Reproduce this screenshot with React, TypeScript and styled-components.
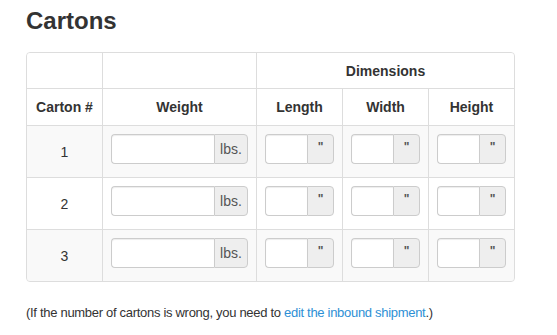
import React from 'react'
import styled, { createGlobalStyle } from 'styled-components'

const GlobalStyle = createGlobalStyle`
    body{
        margin: 0;
        background: #fff;
        color: #333;
        font-family: "Liberation Sans", Arial, Helvetica, sans-serif;
        font-size: 14px;
    }
`

const Page = styled.div`
    padding: 0 26px;
    width: 489px;
`

const Title = styled.h3`
    margin: 8px 0 18px;
    font-size: 24px;
    line-height: 1.1;
    font-weight: bold;
    color: #333;
`

const TablePanel = styled.div`
    border: 1px solid #ddd;
    border-radius: 4px;
    overflow: hidden;
`

const Grid = styled.div`
    display: grid;
    grid-template-columns: 75px 153px 85px 85px 85px;
    grid-template-rows: 35px 36px 51px 51px 51px;
    gap: 1px;
    background-color: #ddd;
`

const HeadCell = styled.div<{ $span?: number }>`
    grid-column: span ${(props) => props.$span || 1};
    display: flex;
    align-items: center;
    justify-content: center;
    background-color: #fff;
    font-weight: bold;
    font-size: 14px;
`

const BodyCell = styled.div<{ $striped: boolean }>`
    display: flex;
    align-items: flex-start;
    justify-content: center;
    padding: 8px;
    background-color: ${(props) => (props.$striped ? '#f9f9f9' : '#fff')};
    &.num{
        align-items: center;
        padding: 0;
    }
`

const InputGroup = styled.div`
    display: flex;
    width: 100%;
    height: 30px;
`

const Field = styled.input`
    flex: 1;
    min-width: 0;
    box-sizing: border-box;
    height: 30px;
    margin: 0;
    padding: 4px 8px;
    border: 1px solid #ccc;
    border-right: none;
    border-radius: 4px 0 0 4px;
    background: #fff;
    box-shadow: inset 0 1px 1px rgba(0, 0, 0, 0.075);
    font: inherit;
    &:focus{
        outline: none;
    }
`

const Addon = styled.span<{ $width: number }>`
    display: flex;
    align-items: center;
    justify-content: center;
    box-sizing: border-box;
    width: ${(props) => props.$width}px;
    height: 30px;
    border: 1px solid #ccc;
    border-radius: 0 4px 4px 0;
    background-color: #eee;
    color: #555;
    font-size: 14px;
    &.inch{
        font-size: 12px;
        font-weight: bold;
        padding-bottom: 4px;
    }
`

const Note = styled.p`
    margin: 21px 0 0;
    font-size: 13px;
    line-height: 20px;
    letter-spacing: -0.3px;
    color: #333;
    & > a{
        color: #2d8fd5;
        text-decoration: none;
    }
`

const cartons = [1, 2, 3]

const App = () => {
  return (
    <Page>
        <GlobalStyle />
        <Title>Cartons</Title>
        <TablePanel>
            <Grid>
                <HeadCell />
                <HeadCell />
                <HeadCell $span={3}>Dimensions</HeadCell>
                <HeadCell>Carton #</HeadCell>
                <HeadCell>Weight</HeadCell>
                <HeadCell>Length</HeadCell>
                <HeadCell>Width</HeadCell>
                <HeadCell>Height</HeadCell>
                {cartons.map((n) => (
                    <React.Fragment key={n}>
                        <BodyCell className='num' $striped={n % 2 === 1}>{n}</BodyCell>
                        <BodyCell $striped={n % 2 === 1}>
                            <InputGroup>
                                <Field type='text' />
                                <Addon $width={34}>lbs.</Addon>
                            </InputGroup>
                        </BodyCell>
                        {['length', 'width', 'height'].map((dim) => (
                            <BodyCell key={dim} $striped={n % 2 === 1}>
                                <InputGroup>
                                    <Field type='text' />
                                    <Addon className='inch' $width={27}>"</Addon>
                                </InputGroup>
                            </BodyCell>
                        ))}
                    </React.Fragment>
                ))}
            </Grid>
        </TablePanel>
        <Note>
            (If the number of cartons is wrong, you need to <a href='#'>edit the inbound shipment</a>.)
        </Note>
    </Page>
  )
}

export default App
